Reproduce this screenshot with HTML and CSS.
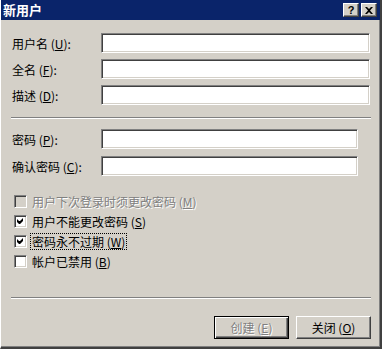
FILE: index.html
```html
<!DOCTYPE html>
<html lang="zh-CN">
<head>
    <meta charset="UTF-8">
    <title>新用户</title>
    <link rel="stylesheet" href="styles.css">
</head>
<body>
    <div class="window">
        <div class="titlebar">
            <span class="title">新用户</span>
            <div class="title-buttons">
                <span class="tbtn">?</span>
                <span class="tbtn close">
                    <svg width="8" height="7" viewBox="0 0 8 7"><path d="M0 0h2l2 2 2-2h2L5 3.5 8 7H6L4 5 2 7H0l3-3.5z" fill="#000"/></svg>
                </span>
            </div>
        </div>

        <div class="content">
            <div class="form-grid">
                <label>用户名 (<u>U</u>):</label>
                <div class="textbox"></div>
                <label>全名 (<u>F</u>):</label>
                <div class="textbox"></div>
                <label>描述 (<u>D</u>):</label>
                <div class="textbox"></div>
            </div>

            <div class="separator sep-top"></div>

            <div class="form-grid short">
                <label>密码 (<u>P</u>):</label>
                <div class="textbox"></div>
                <label>确认密码 (<u>C</u>):</label>
                <div class="textbox"></div>
            </div>

            <div class="checks">
                <div class="check disabled"><span class="box"></span><span class="text">用户下次登录时须更改密码 (<u>M</u>)</span></div>
                <div class="check"><span class="box checked"></span><span class="text">用户不能更改密码 (<u>S</u>)</span></div>
                <div class="check"><span class="box checked"></span><span class="text focus">密码永不过期 (<u>W</u>)</span></div>
                <div class="check"><span class="box"></span><span class="text">帐户已禁用 (<u>B</u>)</span></div>
            </div>

            <div class="separator sep-bottom"></div>

            <div class="buttons">
                <button class="btn default" disabled>创建 (<u>E</u>)</button>
                <button class="btn">关闭 (<u>O</u>)</button>
            </div>
        </div>
    </div>
</body>
</html>
```

FILE: styles.css
```css
body {
    margin: 0;
    font-family: "Noto Sans CJK SC", "Liberation Sans", sans-serif;
    font-size: 12px;
    color: #000;
    background: #d4d0c8;
}
.window {
    width: 382px;
    height: 349px;
    box-sizing: border-box;
    background: #d4d0c8;
    border-left: 1px solid #fff;
    border-right: 2px solid #404040;
    border-bottom: 2px solid #404040;
    box-shadow: inset -1px -1px #808080;
    overflow: hidden;
}
.titlebar {
    height: 20px;
    background: #0a246a;
    display: flex;
    align-items: center;
    justify-content: space-between;
    padding: 0 3px;
    margin-left: -1px;
    margin-right: -2px;
}
.title {
    color: #fff;
    font-weight: bold;
    font-size: 13px;
    line-height: 20px;
}
.title-buttons {
    display: flex;
    gap: 2px;
    margin-right: 2px;
}
.tbtn {
    width: 16px;
    height: 14px;
    box-sizing: border-box;
    background: #d4d0c8;
    border-top: 1px solid #fff;
    border-left: 1px solid #fff;
    border-right: 1px solid #404040;
    border-bottom: 1px solid #404040;
    box-shadow: inset -1px -1px #808080;
    display: flex;
    align-items: center;
    justify-content: center;
    font-family: "Liberation Sans", sans-serif;
    font-weight: bold;
    font-size: 11px;
    line-height: 12px;
}
.content {
    padding: 13px 8px 0 11px;
}
.form-grid {
    display: grid;
    grid-template-columns: 89px 269px;
    grid-auto-rows: 20px;
    row-gap: 6px;
    align-items: center;
}
.form-grid.short {
    grid-template-columns: 89px 257px;
    row-gap: 7px;
}
label {
    line-height: 20px;
    height: 20px;
    padding-top: 1px;
    box-sizing: border-box;
    white-space: nowrap;
}
.textbox {
    height: 20px;
    box-sizing: border-box;
    background: #fff;
    border-top: 1px solid #808080;
    border-left: 1px solid #808080;
    border-right: 1px solid #fff;
    border-bottom: 1px solid #fff;
    box-shadow: inset 1px 1px #404040, inset -1px -1px #d4d0c8;
}
.separator {
    height: 0;
    border-top: 1px solid #808080;
    border-bottom: 1px solid #fff;
    width: 360px;
    margin-left: -1px;
}
.sep-top {
    margin-top: 12px;
    margin-bottom: 10px;
}
.checks {
    margin-top: 18px;
    margin-left: 2px;
    display: flex;
    flex-direction: column;
    gap: 6px;
}
.check {
    display: flex;
    align-items: center;
    gap: 4px;
    height: 14px;
}
.box {
    width: 13px;
    height: 13px;
    flex: none;
    box-sizing: border-box;
    background: #fff;
    border-top: 1px solid #808080;
    border-left: 1px solid #808080;
    border-right: 1px solid #fff;
    border-bottom: 1px solid #fff;
    box-shadow: inset 1px 1px #404040, inset -1px -1px #d4d0c8;
    position: relative;
}
.box.checked::after {
    content: "";
    position: absolute;
    left: 2px;
    top: 2px;
    width: 7px;
    height: 7px;
    background: url("data:image/svg+xml;utf8,<svg xmlns='http://www.w3.org/2000/svg' width='7' height='7'><path d='M6 0v3L3 6H2L0 4V1l2 2h1z' fill='black'/></svg>") no-repeat;
}
.check.disabled .box {
    background: #d4d0c8;
}
.check.disabled .text {
    color: #808080;
    text-shadow: 1px 1px #fff;
}
.text {
    line-height: 15px;
    height: 15px;
    padding: 0 1px;
    white-space: nowrap;
}
.text.focus {
    outline: 1px dotted #000;
}
.sep-bottom {
    margin-top: 29px;
}
.buttons {
    display: flex;
    justify-content: flex-end;
    gap: 7px;
    margin-top: 17px;
    width: 359px;
}
.btn {
    width: 75px;
    height: 23px;
    box-sizing: border-box;
    background: #d4d0c8;
    font-family: inherit;
    font-size: 12px;
    line-height: 20px;
    padding: 0;
    border-top: 1px solid #fff;
    border-left: 1px solid #fff;
    border-right: 1px solid #404040;
    border-bottom: 1px solid #404040;
    box-shadow: inset -1px -1px #808080;
    color: #000;
}
.btn.default {
    border: 1px solid #000;
    box-shadow: inset 1px 1px #fff, inset -1px -1px #404040, inset -2px -2px #808080;
}
.btn:disabled {
    color: #808080;
    text-shadow: 1px 1px #fff;
}
```
